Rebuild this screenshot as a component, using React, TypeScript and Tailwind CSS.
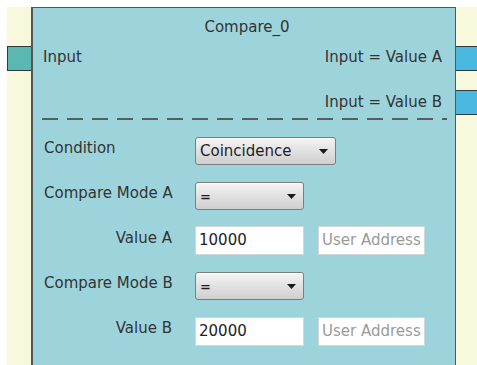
import React from "react";

const font = { fontFamily: '"DejaVu Sans", Verdana, sans-serif' };

function Arrow() {
  return (
    <svg width="9" height="5" viewBox="0 0 9 5" className="shrink-0">
      <path d="M0 0 H9 L4.5 5 Z" fill="#1a1a1a" />
    </svg>
  );
}

function Select({ value, w }: { value: string; w: string }) {
  return (
    <div
      className={`${w} h-[28px] rounded-[3px] border border-[#7d7d7d] bg-gradient-to-b from-[#f4f4f4] to-[#cfcfcf] flex items-center justify-between pl-[4px] pr-[7px] text-[15px] text-[#1e1e28] shadow-[inset_0_1px_0_#ffffff]`}
    >
      <span className={value === "=" ? "text-[13px] font-bold pt-[2px]" : ""}>{value}</span>
      <Arrow />
    </div>
  );
}

function TextBox({ value, placeholder, w }: { value?: string; placeholder?: string; w: string }) {
  return (
    <div
      className={`${w} h-[29px] bg-white border border-[#d2d8da] flex items-center pl-[3px] text-[15px] whitespace-nowrap ${
        value ? "text-[#222]" : "text-[#9a9a9a]"
      }`}
    >
      {value ?? placeholder}
    </div>
  );
}

function Row({
  label,
  right,
  children,
}: {
  label: string;
  right?: boolean;
  children: React.ReactNode;
}) {
  return (
    <div className="flex items-start">
      <div
        className={`w-[128px] shrink-0 ml-[11px] mr-[23px] pt-[1px] leading-[20px] text-[15px] text-[#333] whitespace-nowrap ${
          right ? "text-right" : ""
        }`}
      >
        {label}
      </div>
      {children}
    </div>
  );
}

export default function App() {
  return (
    <div className="w-[477px] h-[365px] bg-white pt-[7px] pl-[7px] flex overflow-hidden" style={font}>
      <div className="w-[24px] bg-[#f8f8dc] pt-[39px]">
        <div className="h-[25px] bg-[#5bb7b1] border-y border-l border-[#2e3a3a]" />
      </div>
      <div className="w-[425px] bg-[#9dd4dc] border-l-2 border-r border-t border-[#555] flex flex-col">
        <div className="pt-[9px] h-[29px] leading-[20px] text-center text-[15px] text-[#333] pl-[6px]">
          Compare_0
        </div>
        <div className="mt-[10px] flex justify-between leading-[20px] text-[15px] text-[#333] pl-[10px] pr-[13px]">
          <span>Input</span>
          <span>Input = Value A</span>
        </div>
        <div className="mt-[25px] flex justify-end leading-[20px] text-[15px] text-[#333] pr-[13px]">
          <span>Input = Value B</span>
        </div>
        <div className="mt-[6px] h-[2px]">
          <svg width="421" height="2" className="block">
            <line
              x1="9"
              y1="1"
              x2="414"
              y2="1"
              stroke="#3a3a3a"
              strokeWidth="1.6"
              strokeDasharray="16 9"
            />
          </svg>
        </div>
        <div className="mt-[17px] flex flex-col gap-[17px]">
          <Row label="Condition">
            <Select value="Coincidence" w="w-[141px]" />
          </Row>
          <Row label="Compare Mode A">
            <Select value="=" w="w-[109px]" />
          </Row>
          <Row label="Value A" right>
            <div className="flex gap-[14px] -mt-px">
              <TextBox value="10000" w="w-[109px]" />
              <TextBox placeholder="User Address" w="w-[107px]" />
            </div>
          </Row>
          <Row label="Compare Mode B">
            <Select value="=" w="w-[109px]" />
          </Row>
          <Row label="Value B" right>
            <div className="flex gap-[14px]">
              <TextBox value="20000" w="w-[109px]" />
              <TextBox placeholder="User Address" w="w-[107px]" />
            </div>
          </Row>
        </div>
      </div>
      <div className="flex-1 bg-[#f8f8dc] pt-[39px]">
        <div className="h-[25px] bg-[#4bb8e0] border-y border-[#2e3a3a]" />
        <div className="mt-[19px] h-[25px] bg-[#4bb8e0] border-y border-[#2e3a3a]" />
      </div>
    </div>
  );
}
